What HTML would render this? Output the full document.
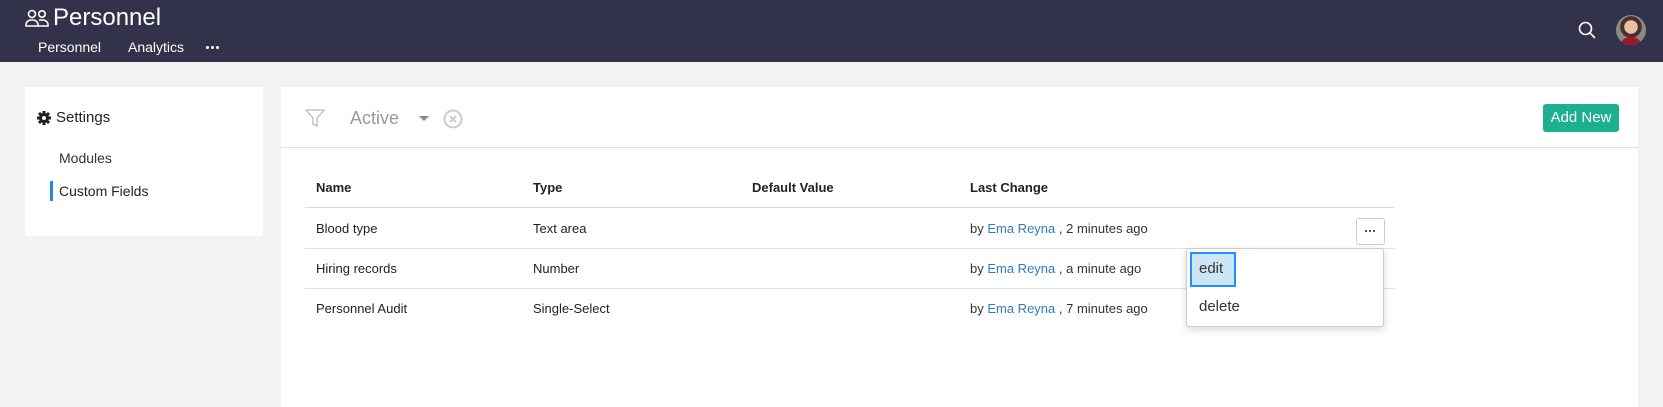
<!DOCTYPE html>
<html><head><meta charset="utf-8"><style>
*{margin:0;padding:0;box-sizing:border-box}
body{width:1663px;height:400px;overflow:hidden;background:#f2f2f2;font-family:"Liberation Sans",sans-serif;color:#222;position:relative;font-size:13px}
.a{position:absolute;white-space:nowrap}
.top{position:absolute;left:0;top:0;width:1663px;height:62px;background:#32334a}
.w{color:#fff}
.card{position:absolute;background:#fff}
.hl{position:absolute;height:1px;background:#e0e0e0}
.lk{color:#2f7ec1}
.dot{position:absolute;width:3px;height:3px;border-radius:50%}
</style></head><body>
<div class="top"></div>
<svg class="a" style="left:25px;top:8px" width="24" height="20" viewBox="0 0 24 20" fill="none" stroke="#fff" stroke-width="1.6"><circle cx="7" cy="6" r="3.5"/><circle cx="17" cy="6" r="3.2"/><path d="M1 18v-2a5 5 0 0 1 5-4h2a5 5 0 0 1 5 4v2z"/><path d="M14 12h4a5 5 0 0 1 5 4v2h-10"/></svg>
<div class="a w" style="left:53px;top:4px;font-size:24px">Personnel</div>
<div class="a w" style="left:38px;top:39px;font-size:14px">Personnel</div>
<div class="a w" style="left:128px;top:39px;font-size:14px">Analytics</div>
<div class="dot" style="left:206px;top:46px;background:#fff"></div><div class="dot" style="left:211px;top:46px;background:#fff"></div><div class="dot" style="left:216px;top:46px;background:#fff"></div>
<svg class="a" style="left:1578px;top:21px" width="18" height="18" viewBox="0 0 18 18" fill="none" stroke="#fff" stroke-width="1.6"><circle cx="7.5" cy="7.5" r="6"/><path d="M12 12l5 5"/></svg>
<div class="a" style="left:1616px;top:15px;width:30px;height:30px;border-radius:50%;background:radial-gradient(circle at 50% 40%,#e8c0a8 0 28%,#4a3028 30% 45%,#8a8a84 47%);overflow:hidden"><div style="position:absolute;left:6px;top:22px;width:18px;height:10px;background:#a01828;border-radius:50% 50% 0 0"></div></div>

<div class="card" style="left:25px;top:87px;width:238px;height:149px"></div>
<svg class="a" style="left:37px;top:111px" width="14" height="14" viewBox="0 0 14 14"><circle cx="7" cy="7" r="5" fill="#222"/><g stroke="#222" stroke-width="3"><path d="M7 0v14M0 7h14M2 2l10 10M12 2L2 12"/></g><circle cx="7" cy="7" r="2" fill="#fff"/></svg>
<div class="a" style="left:56px;top:109px;font-size:15px">Settings</div>
<div class="a" style="left:59px;top:150px;font-size:14px;color:#333">Modules</div>
<div class="a" style="left:50px;top:181px;width:3px;height:20px;background:#1e88e5"></div>
<div class="a" style="left:59px;top:183px;font-size:14px;color:#222">Custom Fields</div>

<div class="card" style="left:281px;top:87px;width:1357px;height:320px"></div>
<div class="hl" style="left:281px;top:147px;width:1357px"></div>
<svg class="a" style="left:305px;top:108px" width="20" height="20" viewBox="0 0 20 20" fill="none" stroke="#bbb" stroke-width="1.3"><path d="M1 2h18l-7 8v8l-4-2v-6z"/></svg>
<div class="a" style="left:350px;top:108px;font-size:18px;color:#999">Active</div>
<svg class="a" style="left:419px;top:116px" width="10" height="6"><path d="M0 0h10L5 5z" fill="#888"/></svg>
<svg class="a" style="left:443px;top:109px" width="20" height="20" viewBox="0 0 20 20" fill="none" stroke="#ccc" stroke-width="2"><circle cx="10" cy="10" r="8.5"/><path d="M7 7l6 6M13 7l-6 6"/></svg>
<div class="a" style="left:1543px;top:104px;width:76px;height:28px;background:#1cb08e;border-radius:3px;color:#fff;font-size:15px;text-align:center;line-height:28px">Add New</div>

<div class="a" style="left:316px;top:180px;font-weight:bold">Name</div>
<div class="a" style="left:533px;top:180px;font-weight:bold">Type</div>
<div class="a" style="left:752px;top:180px;font-weight:bold">Default Value</div>
<div class="a" style="left:970px;top:180px;font-weight:bold">Last Change</div>
<div class="hl" style="left:305px;top:207px;width:1090px;background:#d8d8d8"></div>
<div class="hl" style="left:305px;top:248px;width:1090px"></div>
<div class="hl" style="left:305px;top:288px;width:1090px"></div>
<div class="a" style="left:316px;top:221px">Blood type</div>
<div class="a" style="left:533px;top:221px">Text area</div>
<div class="a" style="left:970px;top:221px;color:#333">by <span class="lk">Ema Reyna</span> , 2 minutes ago</div>
<div class="a" style="left:316px;top:261px">Hiring records</div>
<div class="a" style="left:533px;top:261px">Number</div>
<div class="a" style="left:970px;top:261px;color:#333">by <span class="lk">Ema Reyna</span> , a minute ago</div>
<div class="a" style="left:316px;top:301px">Personnel Audit</div>
<div class="a" style="left:533px;top:301px">Single-Select</div>
<div class="a" style="left:970px;top:301px;color:#333">by <span class="lk">Ema Reyna</span> , 7 minutes ago</div>

<div class="a" style="left:1356px;top:218px;width:29px;height:27px;border:1px solid #ccc;border-radius:3px;background:#fff"></div>
<div class="dot" style="left:1365px;top:230px;width:2px;height:2px;background:#222"></div><div class="dot" style="left:1369px;top:230px;width:2px;height:2px;background:#222"></div><div class="dot" style="left:1373px;top:230px;width:2px;height:2px;background:#222"></div>
<div class="a" style="left:1186px;top:248px;width:198px;height:79px;background:#fff;border:1px solid #ccc;border-radius:3px;box-shadow:0 3px 8px rgba(0,0,0,.15)"></div>
<div class="a" style="left:1190px;top:252px;width:46px;height:35px;background:#cce6f5;border:2px solid #1e90ff"></div>
<div class="a" style="left:1199px;top:260px;font-size:15px;color:#333">edit</div>
<div class="a" style="left:1199px;top:298px;font-size:15px;color:#333">delete</div>
</body></html>
